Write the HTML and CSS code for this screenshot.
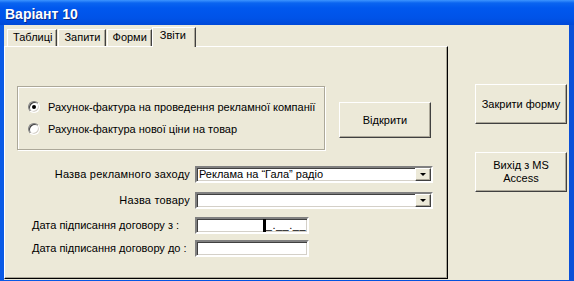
FILE: index.html
```html
<!DOCTYPE html>
<html lang="uk">
<head>
<meta charset="utf-8">
<title>Варіант 10</title>
<link rel="stylesheet" href="styles.css">
</head>
<body>
<div class="window">
  <div class="titlebar"><span class="title">Варіант 10</span></div>
  <div class="client">
    <div class="tabctl">
      <div class="tabs">
        <div class="tab">Таблиці</div>
        <div class="tab">Запити</div>
        <div class="tab">Форми</div>
        <div class="tab active">Звіти</div>
      </div>
      <div class="panel">
        <div class="top">
          <div class="group">
            <div class="radio-row"><span class="radio checked"></span>Рахунок-фактура на проведення рекламної компанії</div>
            <div class="radio-row"><span class="radio"></span>Рахунок-фактура нової ціни на товар</div>
          </div>
          <div class="btn open-btn">Відкрити</div>
        </div>
        <div class="form">
          <div class="label right">Назва рекламного заходу</div>
          <div class="field combo"><span class="value">Реклама на “Гала” радіо</span><span class="drop"><span class="arrow"></span></span></div>
          <div class="label right">Назва товару</div>
          <div class="field combo"><span class="value"></span><span class="drop"><span class="arrow"></span></span></div>
          <div class="label">Дата підписання договору з :</div>
          <div class="field date"><span class="caret"></span><span class="mask">_.__.__</span></div>
          <div class="label">Дата підписання договору до :</div>
          <div class="field date"></div>
        </div>
      </div>
    </div>
    <div class="side">
      <div class="btn side-btn">Закрити форму</div>
      <div class="btn side-btn">Вихід з MS<br>Access</div>
    </div>
  </div>
</div>
</body>
</html>
```
FILE: styles.css
```css
html, body {
  margin: 0;
  padding: 0;
  background: #0054e3;
}
body {
  font-family: "Liberation Sans", Arial, sans-serif;
  font-size: 11px;
  color: #000;
}
.window {
  width: 574px;
  height: 281px;
  display: flex;
  flex-direction: column;
  background: linear-gradient(to right, #0a5ae6 0, #0054e3 50%, #0a50d8 100%);
  overflow: hidden;
}
.titlebar {
  height: 25px;
  flex: none;
  background: linear-gradient(to bottom, #3d95ff 0, #0a64f0 3px, #0058ee 8px, #0053e8 18px, #0049d8 25px);
  box-sizing: border-box;
  padding: 3px 0 0 5px;
  line-height: 22px;
}
.title {
  color: #fff;
  font-weight: bold;
  font-size: 14px;
  text-shadow: 1px 1px #0a2a8a;
}
.client {
  flex: 1;
  margin: 0 5px 1px 4px;
  background: #ece9d8;
  display: flex;
}
.tabctl {
  width: 444px;
  display: flex;
  flex-direction: column;
  margin-bottom: 1px;
}
.tabs {
  height: 21px;
  display: flex;
  align-items: flex-end;
  padding-left: 3px;
  flex: none;
}
.tab {
  height: 17px;
  box-sizing: border-box;
  padding: 0 4px 0 5px;
  line-height: 15px;
  border: 1px solid;
  border-bottom: none;
  border-color: #fff #404040 transparent #fff;
  box-shadow: inset -1px 0 #aca899;
  margin-right: 1px;
  background: #ece9d8;
}
.tab.active {
  height: 20px;
  margin-bottom: -1px;
  margin-left: -1px;
  line-height: 15px;
  padding: 0 9px 0 7px;
  position: relative;
  z-index: 1;
}
.panel {
  flex: 1;
  border: 1px solid;
  border-color: #fff #000 #000 #fff;
  box-shadow: inset -1px -1px #aca899;
  display: flex;
  flex-direction: column;
}
.top {
  display: flex;
  margin-top: 39px;
  padding-left: 12px;
}
.group {
  width: 308px;
  height: 64px;
  box-sizing: border-box;
  border: 1px solid #aca899;
  box-shadow: inset 1px 1px #fff, 1px 1px #fff;
  padding: 13px 0 0 10px;
  display: flex;
  flex-direction: column;
  gap: 8px;
}
.radio-row {
  height: 14px;
  display: flex;
  align-items: center;
  gap: 8px;
}
.radio {
  width: 12px;
  height: 12px;
  box-sizing: border-box;
  border-radius: 50%;
  border: 1px solid;
  border-color: #808080 #fff #fff #808080;
  box-shadow: inset 1px 1px #404040, inset -1px -1px #d4d0c8;
  background: #fff;
  display: grid;
  place-items: center;
}
.radio.checked::after {
  content: "";
  width: 4px;
  height: 4px;
  border-radius: 50%;
  background: #000;
}
.btn {
  box-sizing: border-box;
  border: 1px solid;
  border-color: #fff #404040 #404040 #fff;
  box-shadow: inset -1px -1px #aca899;
  background: #ece9d8;
  display: flex;
  align-items: center;
  justify-content: center;
  text-align: center;
  line-height: 13px;
}
.open-btn {
  width: 92px;
  height: 36px;
  margin-left: 14px;
  margin-top: 16px;
}
.form {
  display: grid;
  grid-template-columns: 158px 238px;
  grid-template-rows: 26px 25px 23px 17px;
  column-gap: 5px;
  align-items: start;
  margin-top: 16px;
  padding-left: 27px;
}
.label {
  line-height: 17px;
  white-space: nowrap;
}
.label.right {
  justify-self: end;
  letter-spacing: 0.2px;
}
.field {
  height: 17px;
  box-sizing: border-box;
  border: 2px solid;
  border-color: #808080 #fff #fff #808080;
  box-shadow: inset 1px 1px #404040, inset -1px -1px #d4d0c8;
  background: #fff;
  display: flex;
  align-items: center;
}
.combo {
  width: 238px;
}
.combo .value {
  flex: 1;
  padding-left: 2px;
  line-height: 13px;
  white-space: nowrap;
}
.drop {
  width: 16px;
  height: 13px;
  box-sizing: border-box;
  border: 1px solid;
  border-color: #fff #404040 #404040 #fff;
  box-shadow: inset -1px -1px #aca899;
  background: #ece9d8;
  display: grid;
  place-items: center;
}
.arrow {
  width: 0;
  height: 0;
  border-left: 3px solid transparent;
  border-right: 3px solid transparent;
  border-top: 3px solid #000;
}
.date {
  width: 114px;
  justify-content: flex-end;
  padding-right: 1px;
}
.caret {
  width: 3px;
  height: 13px;
  background: #000;
}
.mask {
  line-height: 13px;
  letter-spacing: 0.5px;
}
.side {
  flex: 1;
  display: flex;
  flex-direction: column;
  padding: 59px 0 0 27px;
  gap: 28px;
}
.side-btn {
  width: 92px;
  height: 40px;
}
```
